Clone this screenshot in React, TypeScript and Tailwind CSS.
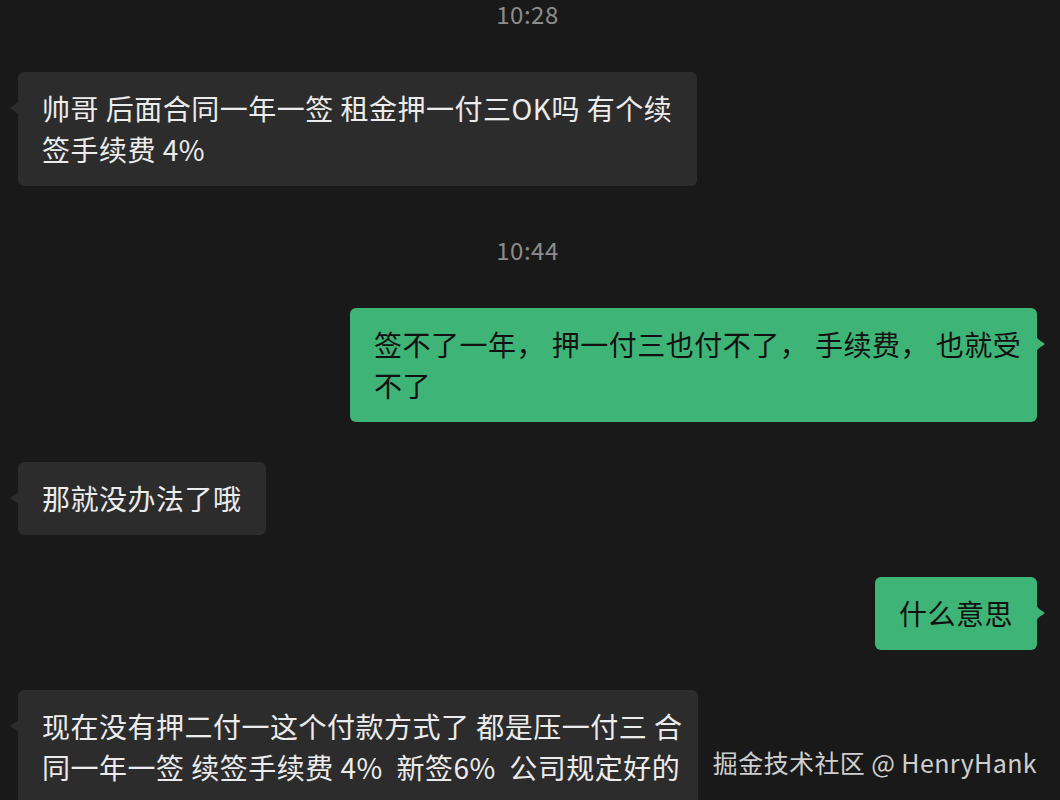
const font = "font-['Noto_Sans_CJK_SC','Noto_Sans',sans-serif]";

type Msg =
  | { kind: "time"; text: string; mt: string }
  | { kind: "in" | "out"; lines: string[]; mt: string; w?: string };

const messages: Msg[] = [
  { kind: "time", text: "10:28", mt: "mt-0" },
  {
    kind: "in",
    lines: ["帅哥 后面合同一年一签 租金押一付三OK吗 有个续", "签手续费 4%"],
    mt: "mt-[44px]",
    w: "w-[679px]",
  },
  { kind: "time", text: "10:44", mt: "mt-[50px]" },
  {
    kind: "out",
    lines: ["签不了一年， 押一付三也付不了， 手续费， 也就受", "不了"],
    mt: "mt-[44px]",
    w: "w-[687px]",
  },
  { kind: "in", lines: ["那就没办法了哦"], mt: "mt-[40px]" },
  { kind: "out", lines: ["什么意思"], mt: "mt-[42px]" },
  {
    kind: "in",
    lines: [
      "现在没有押二付一这个付款方式了 都是压一付三 合",
      "同一年一签 续签手续费 4%  新签6%  公司规定好的",
    ],
    mt: "mt-[40px]",
    w: "w-[680px]",
  },
];

const Tail = ({ side, color }: { side: "left" | "right"; color: string }) => (
  <svg
    width="10"
    height="22"
    viewBox="0 0 10 22"
    className={`absolute top-[25px] ${side === "left" ? "-left-[9px]" : "-right-[9px] -scale-x-100"}`}
  >
    <path d="M10,0 C10,5 7,7 3,9.5 Q0,11 3,12.5 C7,15 10,17 10,22 Z" fill={color} />
  </svg>
);

const Bubble = ({ msg }: { msg: Extract<Msg, { kind: "in" | "out" }> }) => {
  const isOut = msg.kind === "out";
  return (
    <div className={`flex ${isOut ? "justify-end" : "justify-start"} ${msg.mt}`}>
      <div
        className={`relative rounded-[6px] px-6 py-[16px] text-[28px] leading-[41px] tracking-[0.5px] whitespace-pre ${
          msg.w ?? ""
        } ${isOut ? "bg-[#3fb477] text-[#111111]" : "bg-[#2c2c2c] text-[#ececec]"}`}
      >
        <Tail side={isOut ? "right" : "left"} color={isOut ? "#3fb477" : "#2c2c2c"} />
        {msg.lines.map((l, i) => (
          <div key={i}>{l}</div>
        ))}
      </div>
    </div>
  );
};

export default function App() {
  return (
    <div className={`relative w-[1060px] h-[800px] overflow-hidden bg-[#191919] ${font}`}>
      <div className="flex flex-col pl-[18px] pr-[23px]">
        {messages.map((m, i) =>
          m.kind === "time" ? (
            <div
              key={i}
              className={`${m.mt} text-center text-[24px] leading-[28px] tracking-[0.5px] text-[#8c8c8c]`}
            >
              {m.text}
            </div>
          ) : (
            <Bubble key={i} msg={m} />
          )
        )}
      </div>

      <div className="absolute right-[23px] top-[745px] text-[25px] leading-[34px] tracking-[0.4px] text-[#cfcfcf] whitespace-nowrap">
        掘金技术社区 @ HenryHank
      </div>
    </div>
  );
}
